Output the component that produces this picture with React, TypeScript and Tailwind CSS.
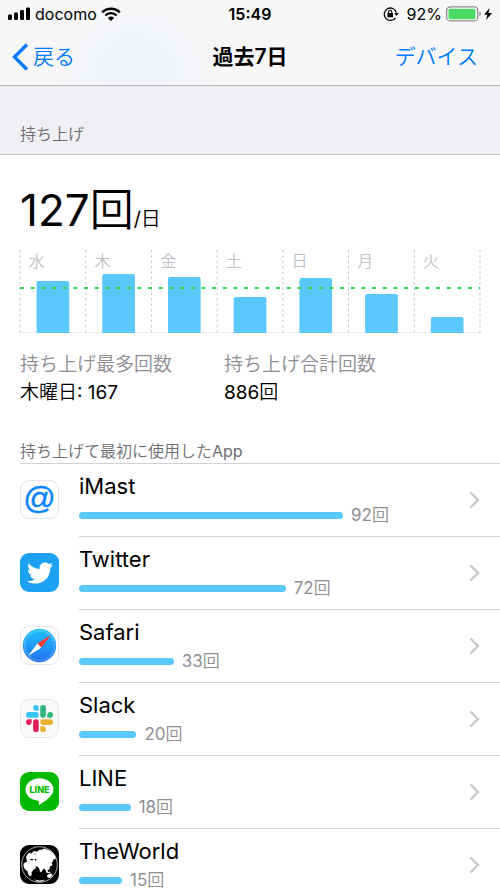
import type { ReactNode } from 'react';
import { FaTwitter } from 'react-icons/fa';

interface DayPickup {
  day: string;
  height: number;
}

interface AppUsage {
  id: string;
  name: string;
  count: number;
  icon: ReactNode;
}

const AVERAGE_Y = 38;
const CHART_HEIGHT = 83;
const MAX_BAR_PERCENT = 67.7;

const days: DayPickup[] = [
  { day: '水', height: 52 },
  { day: '木', height: 59 },
  { day: '金', height: 56 },
  { day: '土', height: 36 },
  { day: '日', height: 55 },
  { day: '月', height: 39 },
  { day: '火', height: 16 },
];

const columnX = (index: number) => (index / days.length) * 100;

const MastIcon = () => (
  <svg viewBox="0 0 39 39" className="size-full overflow-visible" aria-hidden="true">
    <rect x="0.5" y="0.5" width="38" height="38" rx="8.5" fill="#fff" stroke="#e6e6e8" />
    <text
      x="19.5"
      y="29"
      textAnchor="middle"
      fontSize="32"
      fill="#0a84ff"
      stroke="#0a84ff"
      strokeWidth="0.4"
      className="font-['Liberation_Sans',sans-serif]"
    >
      @
    </text>
  </svg>
);

const TwitterIcon = () => (
  <div className="flex size-full items-center justify-center rounded-[9px] bg-[#1da1f2]">
    <FaTwitter className="size-[26px] text-white" aria-hidden="true" />
  </div>
);

const SafariIcon = () => (
  <svg viewBox="0 0 39 39" className="size-full" aria-hidden="true">
    <defs>
      <linearGradient id="safari" x1="0" y1="0" x2="0" y2="1">
        <stop offset="0" stopColor="#1fc4fb" />
        <stop offset="1" stopColor="#1f6ff0" />
      </linearGradient>
    </defs>
    <rect x="0.5" y="0.5" width="38" height="38" rx="8.5" fill="#fff" stroke="#e6e6e8" />
    <circle cx="19.5" cy="19.5" r="16.7" fill="url(#safari)" />
    <circle
      cx="19.5"
      cy="19.5"
      r="14.8"
      fill="none"
      stroke="#fff"
      strokeOpacity="0.5"
      strokeWidth="1.8"
      strokeDasharray="0.5 1.05"
    />
    <path d="M31 9 21.3 21.8 17.4 17.6z" fill="#ff3b30" />
    <path d="M8 30 17.4 17.6 21.3 21.8z" fill="#fff" />
  </svg>
);

const SlackIcon = () => (
  <svg viewBox="0 0 39 39" className="size-full" aria-hidden="true">
    <rect x="0.5" y="0.5" width="38" height="38" rx="8.5" fill="#fafafa" stroke="#e6e6e8" />
    <g transform="translate(6 6) scale(1.125)">
      <path
        fill="#e01e5a"
        d="M5.042 15.165a2.528 2.528 0 0 1-2.52 2.523A2.528 2.528 0 0 1 0 15.165a2.527 2.527 0 0 1 2.522-2.52h2.52v2.52zM6.313 15.165a2.527 2.527 0 0 1 2.521-2.52 2.527 2.527 0 0 1 2.521 2.52v6.313A2.528 2.528 0 0 1 8.834 24a2.528 2.528 0 0 1-2.521-2.522v-6.313z"
      />
      <path
        fill="#36c5f0"
        d="M8.834 5.042a2.528 2.528 0 0 1-2.521-2.52A2.528 2.528 0 0 1 8.834 0a2.528 2.528 0 0 1 2.521 2.522v2.52H8.834zM8.834 6.313a2.528 2.528 0 0 1 2.521 2.521 2.528 2.528 0 0 1-2.521 2.521H2.522A2.528 2.528 0 0 1 0 8.834a2.528 2.528 0 0 1 2.522-2.521h6.312z"
      />
      <path
        fill="#2eb67d"
        transform="rotate(180 12 12)"
        d="M5.042 15.165a2.528 2.528 0 0 1-2.52 2.523A2.528 2.528 0 0 1 0 15.165a2.527 2.527 0 0 1 2.522-2.52h2.52v2.52zM6.313 15.165a2.527 2.527 0 0 1 2.521-2.52 2.527 2.527 0 0 1 2.521 2.52v6.313A2.528 2.528 0 0 1 8.834 24a2.528 2.528 0 0 1-2.521-2.522v-6.313z"
      />
      <path
        fill="#ecb22e"
        transform="rotate(180 12 12)"
        d="M8.834 5.042a2.528 2.528 0 0 1-2.521-2.52A2.528 2.528 0 0 1 8.834 0a2.528 2.528 0 0 1 2.521 2.522v2.52H8.834zM8.834 6.313a2.528 2.528 0 0 1 2.521 2.521 2.528 2.528 0 0 1-2.521 2.521H2.522A2.528 2.528 0 0 1 0 8.834a2.528 2.528 0 0 1 2.522-2.521h6.312z"
      />
    </g>
  </svg>
);

const LineIcon = () => (
  <svg viewBox="0 0 39 39" className="size-full" aria-hidden="true">
    <rect width="39" height="39" rx="9" fill="#00b900" />
    <path
      d="M19.5 6.2c7.8 0 14 5 14 11.3 0 3-1.6 5.4-4 7.7-3 2.9-7.5 6-9.7 7.3-.9.5-1.2.1-1-.8.2-1 .5-2.7-.6-2.9C10.9 28 5.5 23.3 5.5 17.5c0-6.3 6.2-11.3 14-11.3z"
      fill="#fff"
    />
    <text
      x="19.5"
      y="21"
      textAnchor="middle"
      fontSize="9"
      fontWeight="800"
      fill="#00b900"
      className="font-['Inter',sans-serif]"
    >
      LINE
    </text>
  </svg>
);

const WorldIcon = () => (
  <svg viewBox="0 0 39 39" className="size-full" aria-hidden="true">
    <rect width="39" height="39" rx="9" fill="#000" />
    <circle cx="19.5" cy="19.5" r="17.8" fill="none" stroke="#bbb" strokeWidth="0.9" />
    {/* Eurasia */}
    <path
      d="M6 12l2-3.5 2.5-1 .5 1.5 2-2.5 2.5-.5 1 1 2.5-2 3.5-.5 1.5-1 3 1 4 1.5 3 3 2 4-1 1.5-1.5-.5-.5 2.5-1.5 1 1 2-1 1.5-1.5.3-.5 2.7-2 1.5.5 2-1.5-.5-1-2-1.5-1.5-1.5 1.5-1.5 2.5-1-1-1-3.5-2-1.5-1.5-.3.5 1.8-2 1.5-1.5-2-1-2-1.5.5-1.5-1.5-2 .5-2-.5.5-2 2-1z"
      fill="#fff"
    />
    {/* Africa and Arabia */}
    <path
      d="M3.5 18.5l3-1.5 4 1.5 2 4 2-.5-1.5 3.5-1.5 1.5.3 3-2 1.5-1.8-2.5-.5-3-2.5-1.5-1.5-3z"
      fill="#fff"
    />
    {/* Indonesia, Australia and Antarctica */}
    <path
      d="M26 25.5l2 1.5 2-.5.5 1-2.5.8-2-1zM27 30.5l2.5-2 2.5.2.5 1.8-2.5 2.5-2.5-.5zM14 34.6l5 1 6-.6-3 1.5-4 .2z"
      fill="#fff"
    />
    <path d="M9.5 14.5l2.5-.8 1.5.8-1.5 1zM14.5 14l1.5-.2.3 2-1.2-.2zM14 9.5l1.5-1 .2 1z" fill="#000" />
  </svg>
);

const apps: AppUsage[] = [
  { id: 'imast', name: 'iMast', count: 92, icon: <MastIcon /> },
  { id: 'twitter', name: 'Twitter', count: 72, icon: <TwitterIcon /> },
  { id: 'safari', name: 'Safari', count: 33, icon: <SafariIcon /> },
  { id: 'slack', name: 'Slack', count: 20, icon: <SlackIcon /> },
  { id: 'line', name: 'LINE', count: 18, icon: <LineIcon /> },
  { id: 'theworld', name: 'TheWorld', count: 15, icon: <WorldIcon /> },
];

const StatusBar = () => (
  <div className="grid h-7 grid-cols-[1fr_auto_1fr] items-center px-2 text-base">
    <div className="flex items-center gap-1">
      <svg viewBox="0 0 23 14" className="h-[14px] w-[23px]" aria-hidden="true">
        <rect x="0" y="7.5" width="4" height="5.5" rx="1.2" />
        <rect x="6" y="5.5" width="4" height="7.5" rx="1.2" />
        <rect x="12" y="3" width="4" height="10" rx="1.2" />
        <rect x="18" y="0.5" width="4" height="12.5" rx="1.2" />
      </svg>
      <span>docomo</span>
      <svg viewBox="0 0 20 14" className="h-[14px] w-5" fill="none" stroke="#000" aria-hidden="true">
        <path d="M1.2 5.3a12.5 12.5 0 0 1 17.6 0" strokeWidth="2.6" />
        <path d="M4.3 8.5a8 8 0 0 1 11.4 0" strokeWidth="2.4" />
        <path d="M6.9 10.9a4.5 4.5 0 0 1 6.2 0L10 14z" fill="#000" stroke="none" />
      </svg>
    </div>
    <span className="font-semibold">15:49</span>
    <div className="flex items-center justify-end">
      <svg viewBox="0 0 16 16" className="mr-2 size-4" fill="none" stroke="#000" aria-hidden="true">
        <path d="M12.5 11.8A6.2 6.2 0 1 1 13.4 6.5" strokeWidth="1.3" />
        <path d="M11.3 7h4.4l-2.2 3z" fill="#000" stroke="none" />
        <rect x="4.4" y="7" width="5.6" height="4.3" rx="0.6" fill="#000" stroke="none" />
        <path d="M5.6 7.2V5.8a1.6 1.6 0 0 1 3.2 0v1.4" strokeWidth="1.1" />
      </svg>
      <span>92%</span>
      <svg viewBox="0 0 36 16" className="ml-1 h-4 w-9" aria-hidden="true">
        <rect x="0.7" y="0.9" width="31" height="14" rx="3.5" fill="#fff" stroke="#8e8e93" strokeWidth="1.3" />
        <rect x="2.5" y="2.7" width="27" height="10.5" rx="1.5" fill="#4cd964" />
        <path d="M33.3 5.5c2.2.8 2.2 4.2 0 5z" fill="#8e8e93" />
      </svg>
      <svg viewBox="0 0 8 12" className="ml-0.5 h-3 w-2" aria-hidden="true">
        <path d="M5.5 0 0 6.8h3.3L2.2 12 8 4.9H4.5z" />
      </svg>
    </div>
  </div>
);

const NavigationBar = () => (
  <nav className="grid h-[57px] grid-cols-[1fr_auto_1fr] items-center px-3 text-[21px]">
    <a href="#back" className="flex items-center gap-1 text-[#007aff]">
      <svg viewBox="0 0 17 28" className="h-7 w-[17px]" fill="none" aria-hidden="true">
        <path d="M15 1.5 2.5 14 15 26.5" stroke="currentColor" strokeWidth="3.4" />
      </svg>
      戻る
    </a>
    <h1 className="font-['Inter','Noto_Sans_CJK_JP',sans-serif] font-semibold">過去7日</h1>
    <a href="#devices" className="justify-self-end pr-[10px] text-[#007aff]">
      デバイス
    </a>
  </nav>
);

const PickupChart = () => (
  <svg className="block h-[83px] w-full overflow-visible" role="img" aria-label="持ち上げ">
    <line x1="0" x2="100%" y1="82.5" y2="82.5" stroke="#ececee" />
    {[...days, null].map((_, index) => (
      <line
        key={index}
        x1={`${columnX(index)}%`}
        x2={`${columnX(index)}%`}
        y1="0"
        y2={CHART_HEIGHT}
        stroke="#c7c7cc"
        strokeDasharray="2.67 2.67"
      />
    ))}
    {days.map(({ day }, index) => (
      <text key={day} x={`${columnX(index) + 1.9}%`} y="17" fontSize="16" fill="#c0c0c5">
        {day}
      </text>
    ))}
    {/* the inner svg cuts the bars off square at the baseline */}
    <svg width="100%" height={CHART_HEIGHT} overflow="hidden">
      {days.map(({ day, height }, index) => (
        <rect
          key={day}
          x={`${columnX(index) + 3.6}%`}
          y={CHART_HEIGHT - height}
          width="7.1%"
          height={height + 4}
          rx="2"
          fill="#5ac8fa"
        />
      ))}
    </svg>
    <line
      x1="0"
      x2="100%"
      y1={AVERAGE_Y}
      y2={AVERAGE_Y}
      stroke="#32d74b"
      strokeWidth="2"
      strokeDasharray="4 6.67"
    />
  </svg>
);

const AppRow = ({ id, name, count, icon }: AppUsage) => (
  <li>
    <a href={`#${id}`} className="flex items-stretch pl-5">
      <div className="flex w-[59px] shrink-0 items-center pb-0.5">
        <div className="size-[39px]">{icon}</div>
      </div>
      <div className="flex flex-1 items-center border-b border-[#d1d1d6] pr-5">
        <div className="flex-1 pt-1.5 pb-2.5">
          <div className="text-[22px] leading-8">{name}</div>
          <div className="flex h-6 items-center gap-2 pt-0.5 text-[17px] leading-5 text-[#8e8e93]">
            <div
              className="h-[7px] rounded-full bg-[#5ac8fa]"
              style={{ width: `${(count / apps[0].count) * MAX_BAR_PERCENT}%` }}
            />
            <span>{count}回</span>
          </div>
        </div>
        <svg viewBox="0 0 11 18" className="h-[18px] w-[11px]" fill="none" aria-hidden="true">
          <path d="M1.5 1.5 9 9l-7.5 7.5" stroke="#c7c7cc" strokeWidth="2.3" />
        </svg>
      </div>
    </a>
  </li>
);

const App = () => {
  return (
    <div className="flex h-screen flex-col bg-white font-['Inter','Noto_Sans_CJK_JP_DemiLight','Noto_Sans_CJK_JP_Light','Noto_Sans_CJK_JP',sans-serif] text-black">
      <header className="border-b border-[#b8b8bc] bg-[#f7f7f8] bg-[radial-gradient(circle_at_27%_90%,#f1f5fa_0,#f1f5fa_30px,#f7f7f8_80px)]">
        <StatusBar />
        <NavigationBar />
      </header>

      <main className="flex-1 overflow-y-auto [scrollbar-width:none]">
        <h2 className="border-b border-[#c8c7cc] bg-[#efeff4] px-5 pt-9 pb-2 text-base text-[#6d6d72]">
          持ち上げ
        </h2>

        <section className="px-5 pt-7">
          <p className="text-[44px] leading-[55px]">
            127回<span className="text-xl">/日</span>
          </p>
          <div className="mt-3">
            <PickupChart />
          </div>
          <dl className="mt-[18px] grid grid-cols-[204px_1fr] text-[19px] leading-7">
            <div>
              <dt className="text-[#8e8e93]">持ち上げ最多回数</dt>
              <dd>木曜日: 167</dd>
            </div>
            <div>
              <dt className="text-[#8e8e93]">持ち上げ合計回数</dt>
              <dd>886回</dd>
            </div>
          </dl>
        </section>

        <section className="pt-8">
          <h2 className="ml-5 border-b border-[#d1d1d6] text-base text-[#6d6d72]">
            持ち上げて最初に使用したApp
          </h2>
          <ul>
            {apps.map((app) => (
              <AppRow key={app.id} {...app} />
            ))}
          </ul>
        </section>
      </main>
    </div>
  );
};

export default App;
